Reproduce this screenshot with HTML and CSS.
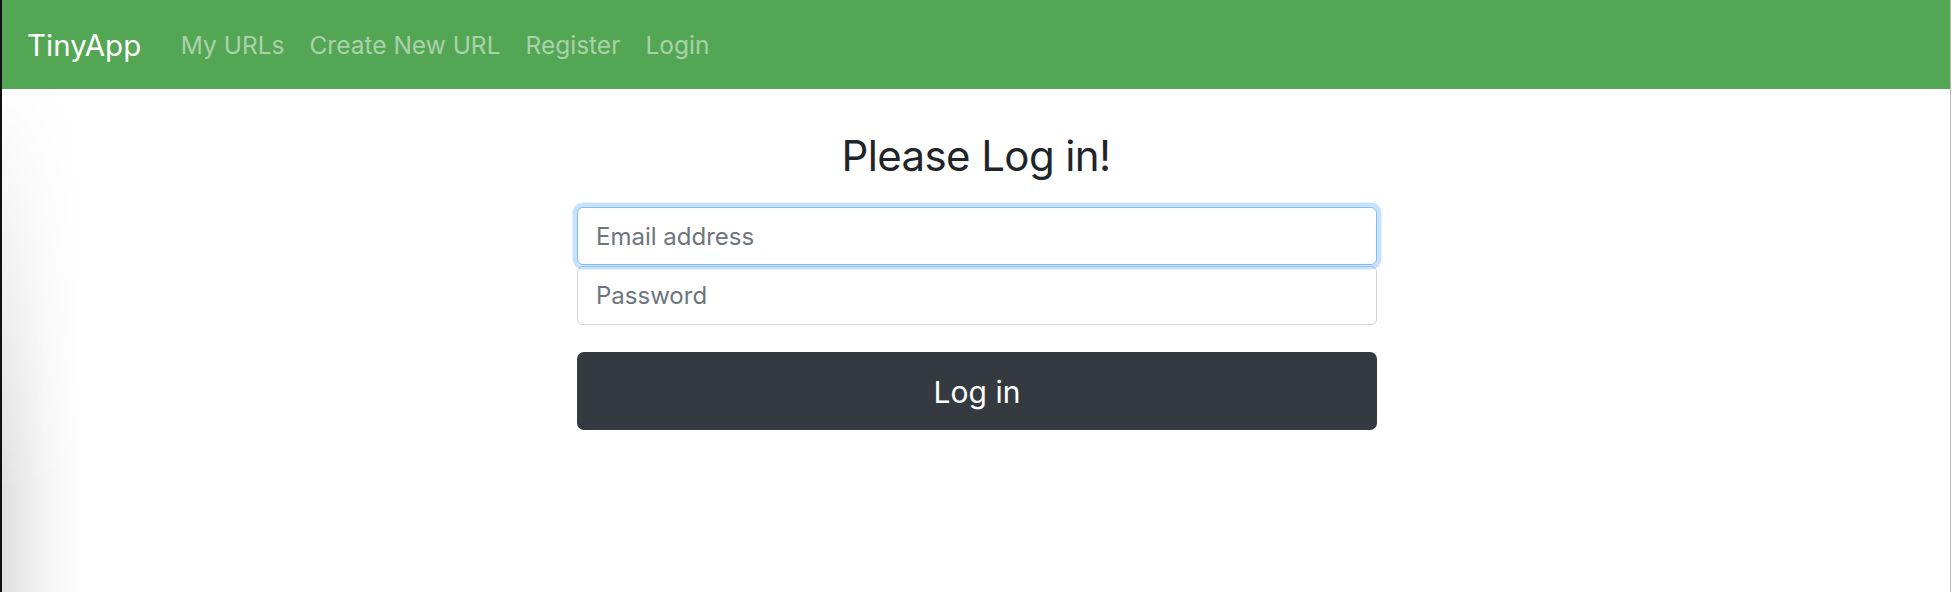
FILE: index.html
```html
<!DOCTYPE html>
<html lang="en">
<head>
<meta charset="utf-8">
<title>TinyApp - Login</title>
<link rel="stylesheet" href="styles.css">
</head>
<body>
  <div class="frame">
    <div class="page">
      <nav class="navbar">
        <a class="brand" href="#">TinyApp</a>
        <ul class="nav">
          <li><a class="nav-link" href="#">My URLs</a></li>
          <li><a class="nav-link" href="#">Create New URL</a></li>
          <li><a class="nav-link" href="#">Register</a></li>
          <li><a class="nav-link" href="#">Login</a></li>
        </ul>
      </nav>
      <main class="content">
        <h3 class="title">Please Log in!</h3>
        <form class="login-form">
          <input class="field field-email" type="email" placeholder="Email address">
          <input class="field field-password" type="password" placeholder="Password">
          <button class="btn-login" type="button">Log in</button>
        </form>
      </main>
      <div class="side-shadow"></div>
    </div>
    <div class="edge"></div>
  </div>
</body>
</html>
```

FILE: styles.css
```css
* { box-sizing: border-box; }

html, body {
  margin: 0;
  padding: 0;
  height: 100%;
  background: #ffffff;
}

body {
  font-family: Inter, "Noto Sans", "Liberation Sans", sans-serif;
  color: #212529;
  overflow: hidden;
}

.frame {
  display: flex;
  height: 592px;
  border-left: 2px solid #111;
}

.page {
  position: relative;
  flex: 1;
  display: flex;
  flex-direction: column;
  background: #ffffff;
}

.edge {
  width: 2px;
  border-left: 1px solid #b5b5b5;
  background: #ffffff;
}

.navbar {
  height: 89px;
  background: #53a653;
  display: flex;
  align-items: center;
  padding: 2px 0 0 25px;
}

.brand {
  color: #ffffff;
  text-decoration: none;
  font-size: 29.5px;
  line-height: 1;
  margin-right: 27px;
}

.nav {
  list-style: none;
  margin: 0;
  padding: 0;
  display: flex;
}

.nav-link {
  display: block;
  color: rgba(255, 255, 255, 0.5);
  text-decoration: none;
  font-size: 24.5px;
  line-height: 1;
  padding: 0 12.5px;
}

.content {
  display: flex;
  flex-direction: column;
  align-items: center;
}

.title {
  margin: 42px 0 0 0;
  font-size: 42px;
  letter-spacing: -0.6px;
  font-weight: 400;
  line-height: 1.2;
  color: #212529;
}

.login-form {
  width: 800px;
  margin-top: 26px;
  display: flex;
  flex-direction: column;
  margin-left: 2px;
}

.field {
  display: block;
  width: 100%;
  height: 58px;
  padding: 0 18px;
  font-family: inherit;
  font-size: 24px;
  color: #495057;
  background: #ffffff;
  border: 1.5px solid #ced4da;
  border-radius: 6px;
  outline: none;
}

.field::placeholder {
  color: #6c757d;
  opacity: 1;
}

.field-email {
  border-color: #80bdff;
  box-shadow: 0 0 0 4.5px rgba(0, 123, 255, 0.22);
  position: relative;
  z-index: 1;
}

.field-password {
  margin-top: 1px;
  height: 59px;
}

.btn-login {
  margin-top: 27px;
  height: 78px;
  width: 100%;
  background: #343a40;
  color: #ffffff;
  border: none;
  border-radius: 7px;
  font-family: inherit;
  font-size: 30px;
  line-height: 1;
  padding-top: 2px;
}

.side-shadow {
  position: absolute;
  left: 0;
  top: 89px;
  bottom: 0;
  width: 110px;
  background: linear-gradient(to right, rgba(0, 0, 0, 0.12), rgba(0, 0, 0, 0.04) 40%, rgba(0, 0, 0, 0) 75%);
  -webkit-mask-image: linear-gradient(to bottom, rgba(0, 0, 0, 0.05), rgba(0, 0, 0, 1) 80%);
  mask-image: linear-gradient(to bottom, rgba(0, 0, 0, 0.05), rgba(0, 0, 0, 1) 80%);
  pointer-events: none;
}
```
